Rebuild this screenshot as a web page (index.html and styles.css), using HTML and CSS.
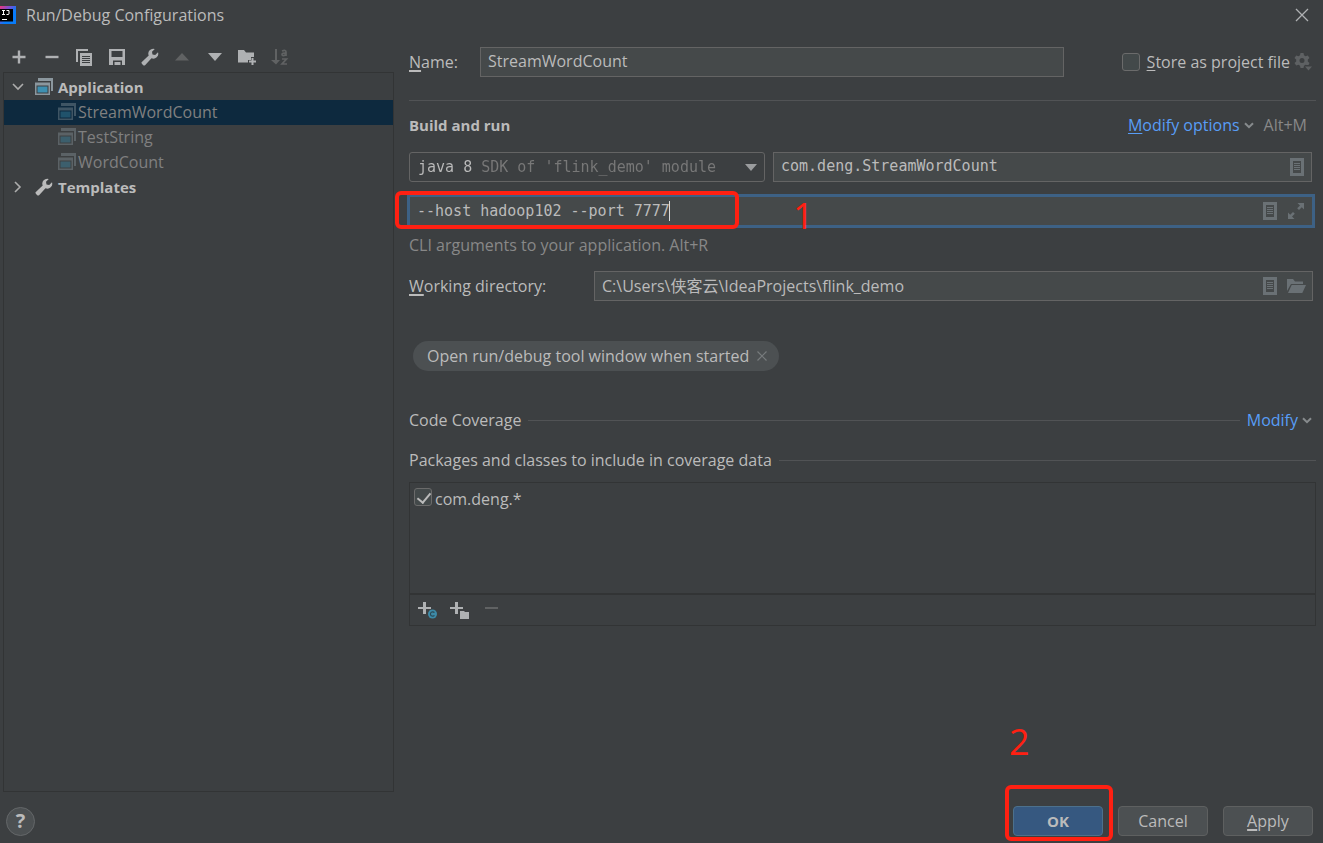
FILE: index.html
```html
<!DOCTYPE html>
<html lang="en">
<head>
<meta charset="utf-8">
<title>Run/Debug Configurations</title>
<link rel="stylesheet" href="styles.css">
</head>
<body>
<svg class="defs" aria-hidden="true">
  <symbol id="wrench" viewBox="0 0 18 18"><path d="M17 4.2a4.900 4.900 0 0 1-6.500 6.100L4.300 16.900a1.500 1.500 0 0 1-2.300 0l-.900-.900a1.500 1.500 0 0 1 0-2.300L7.700 7.500A4.900 4.900 0 0 1 13.800 1L11 3.800l.500 2.700 2.700.500z"/></symbol>
  <symbol id="app" viewBox="0 0 18 17"><path class="app-frame" d="M3 0h15v13h-2V3H3z"/><path class="app-frame" fill-rule="evenodd" d="M0 4.500h15V17H0zM1.500 7.500v8h12v-8z"/><path class="app-fill" d="M2.500 8.500h10v6h-10z"/></symbol>
  <symbol id="doc" viewBox="0 0 14 18"><path fill-rule="evenodd" d="M0 0h14v18H0zM3 3v12h8V3z"/><path d="M4 5h6v1H4zM4 7h6v1H4zM4 9h6v1H4zM4 11h6v1H4z"/></symbol>
  <symbol id="chev" viewBox="0 0 10 7"><path d="M1 1.200l4 4 4-4" fill="none" stroke="currentColor" stroke-width="2"/></symbol>
</svg>

<header class="titlebar">
  <svg class="logo" width="16" height="18" viewBox="0 0 16 18" aria-hidden="true">
    <defs><linearGradient id="brand" x1="0" y1="0" x2="1" y2="1"><stop offset="0" stop-color="#f0357a"/><stop offset=".35" stop-color="#7052d8"/><stop offset=".6" stop-color="#087cfa"/></linearGradient></defs>
    <path fill="url(#brand)" d="M0 0h16v18H0z"/><path fill="#000" d="M0 3h13v12.500H0z"/><path d="M2 4.500h3M3.500 4.500v4M2 8.500h3M6.500 4.500h2.500v3.500q0 .500-1 .500H6.500M2 13.500h5" fill="none" stroke="#fff"/>
  </svg>
  <h1 class="title">Run/Debug Configurations</h1>
  <button class="icon-btn" aria-label="Close"><svg width="14" height="14" viewBox="0 0 14 14"><path d="M1 1l12 12M13 1L1 13" fill="none" stroke="currentColor" stroke-width="1.300"/></svg></button>
</header>

<main class="main">
  <aside class="sidebar">
    <div class="toolbar">
      <button class="icon-btn tool" aria-label="Add"><svg width="14" height="14" viewBox="0 0 14 14"><path d="M5.800 0.500h2.400v5.300h5.300v2.400H8.200v5.300H5.800V8.200H.5V5.800h5.300z"/></svg></button>
      <button class="icon-btn tool" aria-label="Remove"><svg width="14" height="14" viewBox="0 0 14 14"><path d="M.5 5.800h13v2.400H.5z"/></svg></button>
      <button class="icon-btn tool" aria-label="Copy"><svg width="16" height="17" viewBox="0 0 16 17"><path d="M0 0h12v2H2v11H0z"/><path fill-rule="evenodd" d="M4 4h12v13H4zM6 7v1h8V7zM6 9v1h8V9zM6 11v1h8v-1zM6 13v1h8v-1z"/></svg></button>
      <button class="icon-btn tool" aria-label="Save"><svg width="16" height="16" viewBox="0 0 16 16"><path fill-rule="evenodd" d="M0 0h16v16h-3v-4.500H4V16H0zM2.500 2v6h11V2z"/><path d="M5.500 13h6v3h-6z"/></svg></button>
      <button class="icon-btn tool" aria-label="Edit templates"><svg width="18" height="18"><use href="#wrench"/></svg></button>
      <button class="icon-btn tool" aria-label="Move up" disabled><svg width="14" height="8" viewBox="0 0 14 8"><path d="M7 0l7 7.500H0z"/></svg></button>
      <button class="icon-btn tool" aria-label="Move down"><svg width="14" height="8" viewBox="0 0 14 8"><path d="M0 0h14L7 8z"/></svg></button>
      <button class="icon-btn tool" aria-label="New folder"><svg width="19" height="16" viewBox="0 0 19 16"><path d="M0 1h6l2 2.500h8V8h-3v3h-3v2.500H0z"/><path d="M13.500 9h2v2.500H18v2h-2.500V16h-2v-2.500H11v-2h2.500z"/></svg></button>
      <button class="icon-btn tool" aria-label="Sort" disabled><svg width="18" height="17" viewBox="0 0 18 17"><path d="M4 0h2v11h3l-4 4.500L0 11h4z"/><path d="M11 2q4-1.500 4 1v4M15 4.300q-4-.800-4 1.200t4 .300M11 10h4.500L11 15h5" fill="none" stroke="currentColor" stroke-width="1.700"/></svg></button>
    </div>
    <ul class="tree">
      <li class="row group"><svg class="twist" width="12" height="8" viewBox="0 0 12 8"><path d="M1 1l5 5 5-5" fill="none" stroke="currentColor" stroke-width="1.600"/></svg><svg width="18" height="17"><use href="#app"/></svg>Application</li>
      <li class="row leaf selected"><svg width="18" height="17"><use href="#app"/></svg>StreamWordCount</li>
      <li class="row leaf"><svg width="18" height="17"><use href="#app"/></svg>TestString</li>
      <li class="row leaf"><svg width="18" height="17"><use href="#app"/></svg>WordCount</li>
      <li class="row group"><svg class="twist" width="12" height="12" viewBox="0 0 12 12"><path d="M3 1l5 5-5 5" fill="none" stroke="currentColor" stroke-width="1.600"/></svg><svg width="18" height="18"><use href="#wrench"/></svg>Templates</li>
    </ul>
  </aside>

  <form class="content">
    <div class="name-row">
      <label for="name"><span class="key">N</span>ame:</label>
      <span class="field name-field"><input id="name" class="entry" type="text" value="StreamWordCount"></span>
      <span class="store"><input id="store" class="check" type="checkbox"><label for="store"><span class="key thin">S</span>tore as project file</label>
        <button type="button" class="icon-btn faint" aria-label="Storage options"><svg width="18" height="18" viewBox="0 0 18 18"><path fill-rule="evenodd" d="M6.500 0h3l.500 2.300 1.500.900 2.300-.800L15.500 5l-1.700 1.600v1.800L15.500 10l-1 2h-2l-1-.200-1.500.900L9.500 15h-3L6 12.700l-1.500-.900-2.300.800L.5 10l1.700-1.600V6.600L.5 5l1.700-2.600 2.300.800L6 2.300zM8 5a2.500 2.500 0 1 0 0 5 2.500 2.500 0 0 0 0-5z"/><path d="M11 13.500h7l-3.500 4z"/></svg></button></span>
    </div>

    <div class="section-row">
      <h2 class="heading">Build and run</h2>
      <a class="link" href="#options"><span class="key thin">M</span>odify options</a>
      <svg class="chev" width="10" height="7"><use href="#chev"/></svg>
      <span class="muted">Alt+M</span>
    </div>

    <div class="run-row">
      <div class="combo">
        <select class="sdk mono" aria-label="SDK"><option>java 8 SDK of 'flink_demo' module</option></select>
        <svg class="combo-arrow" width="12" height="7" viewBox="0 0 12 7"><path d="M0 0h12L6 7z"/></svg>
      </div>
      <div class="field class-field"><input class="entry mono" type="text" aria-label="Main class" value="com.deng.StreamWordCount"><button type="button" class="icon-btn in-field" aria-label="Browse classes"><svg width="14" height="18"><use href="#doc"/></svg></button></div>
    </div>

    <div class="field args">
      <input class="entry mono args-entry" type="text" aria-label="Program arguments" value="--host hadoop102 --port 7777"><span class="caret"></span>
      <span class="tools"><button type="button" class="icon-btn in-field" aria-label="Insert macro"><svg width="14" height="18"><use href="#doc"/></svg></button><button type="button" class="icon-btn in-field wide" aria-label="Expand"><svg width="16" height="16" viewBox="0 0 16 16"><path d="M9.500 0H16v6.500l-2.200-2.200-2.800 2.800-1.800-1.800L12 2.500zM0 9.500l2.200 2.200L5 8.900l1.800 1.800L4 13.500 6.500 16H0z"/></svg></button></span>
      <span class="mark mark-args"></span><span class="mark-number number-one">1</span>
    </div>
    <p class="hint muted">CLI arguments to your application. Alt+R</p>

    <div class="dir-row">
      <label for="dir"><span class="key">W</span>orking directory:</label>
      <div class="field dir-field"><input id="dir" class="entry" type="text" value="C:\Users\侠客云\IdeaProjects\flink_demo"><span class="tools"><button type="button" class="icon-btn in-field" aria-label="Insert macro"><svg width="14" height="18"><use href="#doc"/></svg></button><button type="button" class="icon-btn in-field wide" aria-label="Browse"><svg width="19" height="14" viewBox="0 0 19 14"><path d="M0 0h6l2 2.500h8V5H4L0 12z"/><path d="M4.700 6H19l-3.700 8H1z"/></svg></button></span></div>
    </div>

    <div class="chip">Open run/debug tool window when started<button type="button" class="icon-btn chip-close" aria-label="Remove option"><svg width="10" height="10" viewBox="0 0 10 10"><path d="M.5.5l9 9M9.500.5l-9 9" fill="none" stroke="currentColor" stroke-width="1.200"/></svg></button></div>

    <div class="divided coverage"><span>Code Coverage</span><span class="rule"></span><a class="link" href="#modify">Modify</a><svg class="chev" width="10" height="7"><use href="#chev"/></svg></div>
    <div class="divided packages"><span>Packages and classes to include in coverage data</span><span class="rule"></span></div>

    <div class="list">
      <div class="list-body"><input id="pkg" class="check" type="checkbox" checked><label for="pkg">com.deng.*</label></div>
      <div class="list-tools">
        <button type="button" class="icon-btn" aria-label="Add class"><svg width="20" height="18" viewBox="0 0 20 18"><path d="M5 1h3v5h5v2H8v5H5V8H0V6h5z"/><circle cx="14.500" cy="13" r="4.500" fill="#3d8ba8"/><path d="M16.400 11.700a2.200 2.200 0 1 0 0 2.600" fill="none" stroke="#2c4a56" stroke-width="1.200"/></svg></button>
        <button type="button" class="icon-btn" aria-label="Add package"><svg width="20" height="18" viewBox="0 0 20 18"><path d="M5 1h3v5h5v2H8v5H5V8H0V6h5z"/><path d="M10 10h4l1 1h4v7h-9z"/></svg></button>
        <button type="button" class="icon-btn" aria-label="Remove package" disabled><svg width="20" height="18" viewBox="0 0 20 18"><path d="M3 6h13v2H3z"/></svg></button>
      </div>
    </div>
  </form>
</main>

<footer class="footer">
  <button class="help" aria-label="Help">?</button>
  <span class="ok-wrap"><button class="btn primary">OK</button><span class="mark mark-ok"></span><span class="mark-number number-two">2</span></span>
  <button class="btn">Cancel</button>
  <button class="btn"><span class="key">A</span>pply</button>
</footer>
</body>
</html>
```
FILE: styles.css
```css
* { box-sizing: border-box; }
body {
  margin: 0;
  min-height: 100vh;
  display: flex;
  flex-direction: column;
  background: #3c3f41;
  color: #bbbbbb;
  font: 16px/24px "Open Sans", "Noto Sans CJK SC", sans-serif;
}
svg { fill: currentColor; flex: none; display: block; }
.defs { position: absolute; width: 0; height: 0; }
input, button, select { font: inherit; color: inherit; }
h1, h2, p, ul { margin: 0; padding: 0; }
.icon-btn {
  display: flex;
  align-items: center;
  justify-content: center;
  padding: 0;
  border: 0;
  background: none;
  color: #afb1b3;
}
.icon-btn:disabled { color: #606263; }
.key { text-decoration: underline 2px; text-underline-offset: 2px; }
.thin { text-decoration-thickness: 1px; }
.muted { color: #888888; }
.link { color: #589df6; text-decoration: none; }
.mono { font-family: "DejaVu Sans Mono", monospace; font-size: 15px; }

.titlebar { display: flex; align-items: center; height: 30px; padding-right: 14px; }
.logo { margin-right: 10px; }
.title { flex: 1; font-size: 16px; font-weight: 400; }

.main {
  flex: 1;
  display: grid;
  grid-template-columns: 391px minmax(0, 1fr);
  gap: 15px;
  padding: 0 7px 0 3px;
}
.sidebar { display: flex; flex-direction: column; }
.toolbar { display: flex; align-items: center; width: 293px; height: 42px; padding-top: 12px; }
.tool { flex: 1; height: 30px; }
.tree {
  flex: 1;
  list-style: none;
  border: 1px solid #323435;
  padding-top: 2px;
}
.row { display: flex; align-items: center; gap: 5px; height: 25px; padding-bottom: 2px; }
.group { font-size: 15px; font-weight: 700; padding-left: 8px; }
.twist { margin-right: 6px; color: #adadad; }
.leaf { padding-left: 54px; gap: 2px; color: #808080; }
.selected { background: #0d293e; }
.leaf svg { opacity: 0.4; }
.app-frame { fill: #8b979e; }
.app-fill { fill: #3d8fb0; }

.content { display: flex; flex-direction: column; }
.name-row {
  display: flex;
  align-items: center;
  height: 71px;
  padding: 17px 4px 24px 0;
  border-bottom: 1px solid #515355;
}
.name-row > label { width: 71px; }
.field {
  display: flex;
  align-items: center;
  height: 30px;
  border: 1px solid #646464;
  background: #45494a;
}
.name-field { flex: 1; margin-right: 58px; }
.entry {
  flex: 1;
  min-width: 0;
  height: 100%;
  padding: 0 7px 2px;
  border: 0;
  background: none;
  outline: 0;
}
.store { display: flex; align-items: center; gap: 4px; }
.check {
  appearance: none;
  width: 18px;
  height: 18px;
  margin: 0;
  border: 1px solid #6b6b6b;
  border-radius: 3px;
  background: #43494a;
}
.store .check { margin-right: 3px; }
.check:checked::after {
  content: "";
  display: block;
  width: 6px;
  height: 11px;
  margin: 1px 0 0 5px;
  border: solid #bbbbbb;
  border-width: 0 2px 2px 0;
  transform: rotate(40deg);
}
.icon-btn.faint { color: #5e6163; }

.section-row { display: flex; align-items: center; padding: 12px 9px 15px 0; }
.heading { flex: 1; font-size: 15px; font-weight: 700; }
.chev { margin: 0 10px 0 4px; color: #878b8d; }

.run-row { display: grid; grid-template-columns: 356px minmax(0, 1fr); gap: 8px; padding-right: 4px; }
.combo {
  display: flex;
  align-items: center;
  height: 30px;
  padding: 0 7px 0 8px;
  border: 1px solid #646464;
  border-radius: 3px;
}
.sdk {
  flex: 1;
  appearance: none;
  padding: 0;
  border: 0;
  outline: 0;
  color: transparent;
  background: linear-gradient(90deg, #bbbbbb 58px, #787878 58px) text;
}
.combo-arrow { color: #9a9c9e; }
.in-field { width: 29px; color: #6a7175; }
.wide { width: 24px; }
.tools { display: flex; align-items: center; margin-left: auto; padding-right: 4px; }

.args {
  position: relative;
  height: 34px;
  margin: 12px 1px 0 -2px;
  border: 3px solid #3d6185;
}
.args-entry { flex: none; width: calc(28ch + 6px); padding: 0 0 0 7px; }
.caret { width: 1px; height: 20px; background: #dddddd; }
.hint { padding: 5px 0 14px; }
.dir-row { display: grid; grid-template-columns: 185px minmax(0, 1fr); align-items: center; padding-right: 3px; }
.chip {
  display: flex;
  align-items: center;
  align-self: flex-start;
  height: 30px;
  margin: 40px 0 0 4px;
  padding: 0 12px 0 14px;
  border-radius: 15px;
  background: #4c5052;
}
.chip-close { margin-left: 8px; color: #777b7d; }
.divided { display: flex; align-items: center; }
.rule { flex: 1; height: 1px; margin-left: 7px; background: #515355; }
.coverage { margin-top: 37px; }
.coverage .link { margin-left: 7px; }
.coverage .chev { margin-right: 4px; }
.packages { margin: 16px 0 10px; }
.list { border: 1px solid #323435; }
.list-body { display: flex; align-items: flex-start; gap: 3px; min-height: 112px; padding: 4px; border-bottom: 2px solid #323435; }
.list-body .check { margin-top: 1px; }
.list-tools { display: flex; align-items: center; gap: 12px; height: 30px; padding-left: 8px; }

.footer { display: flex; align-items: center; gap: 15px; padding: 14px 10px 7px 6px; }
.help {
  width: 29px;
  height: 29px;
  margin-right: auto;
  padding: 0;
  border: 1px solid #646769;
  border-radius: 50%;
  background: #4c5052;
  font-size: 20px;
  font-weight: 700;
  line-height: 24px;
}
.btn {
  width: 90px;
  height: 30px;
  padding: 0;
  border: 1px solid #5e6060;
  border-radius: 4px;
  background: #4c5052;
}
.primary { border-color: #4c708c; background: #365880; font-size: 15px; font-weight: 700; }
.ok-wrap { position: relative; display: flex; }

.mark { position: absolute; border: 4px solid #ff2012; border-radius: 6px; pointer-events: none; }
.mark-args { left: -15px; top: -6px; width: 344px; height: 38px; }
.mark-ok { left: -8px; top: -21px; width: 108px; height: 56px; }
.mark-number { position: absolute; color: #ff2012; font-size: 36px; line-height: 36px; }
.number-one { left: 383px; top: 1px; }
.number-two { left: -4px; top: -82px; }
```
